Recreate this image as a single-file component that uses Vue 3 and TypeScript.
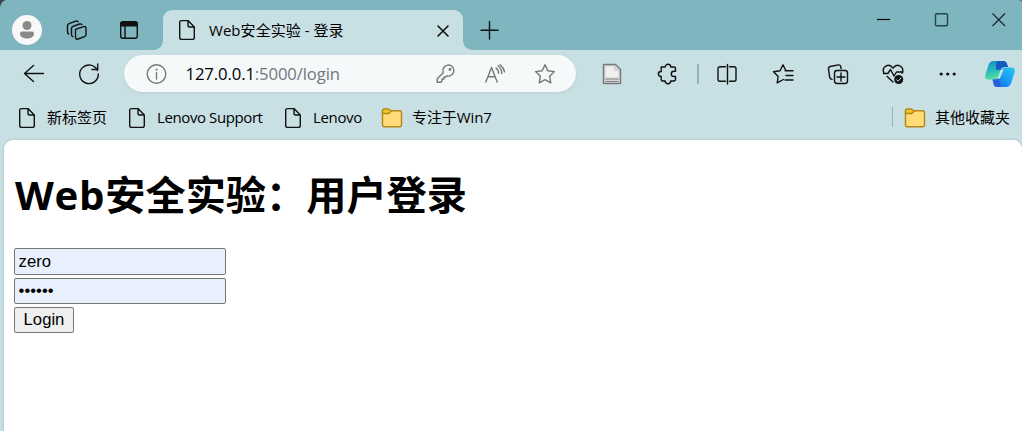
<script setup lang="ts">
import { ref } from 'vue'

const username = ref('zero')
const password = ref('123456')
</script>

<template>
  <div class="browser">
    <svg class="corner" width="8" height="8"><path d="M0 0H6Q1 1 0 7Z" fill="#3d4143" /></svg>
    <svg class="corner right" width="4" height="2"><path d="M0 0H4V2Q3 0 0 0Z" fill="#55666a" /></svg>
    <header class="tabs">
      <div class="avatar">
        <svg width="30" height="30" viewBox="0 0 30 30" fill="#8b8988">
          <circle cx="15" cy="10.5" r="4.5" />
          <path d="M10 16.5H20Q22 16.5 22 18.5C22 22 19 23.5 15 23.5S8 22 8 18.5Q8 16.5 10 16.5Z" />
        </svg>
      </div>
      <svg class="icon workspaces" viewBox="0 0 24 24">
        <path d="M11.1 11.1 18.6 8.6Q21 8 21 10.4V16.5Q21 18 19.5 18.6L13 21Q10.5 21.8 10.5 19V12.2Q10.5 11.4 11.1 11.1Z" />
        <path d="M7.8 18.7Q6.5 18.2 6.5 16.6V10.6Q6.5 9 8 8.4L14.5 6Q16 5.5 16.8 6.5M3.7 16Q2.5 15.5 2.5 14V8Q2.5 6.3 4 5.7L10.7 3.1Q12.2 2.6 13 3.6" />
      </svg>
      <svg class="icon tab-actions" viewBox="0 0 24 24">
        <rect x="3.7" y="3.7" width="16.6" height="16.6" rx="2.2" /><path d="M4 4.8H20V7.8H4Z" fill="#111" /><path d="M8 8V20" />
      </svg>
      <div class="tab">
        <svg class="icon" viewBox="0 0 24 24"><path d="M6.5 2.6H13L19.3 9V19.4Q19.3 21.4 17.3 21.4H6.7Q4.7 21.4 4.7 19.4V4.6Q4.7 2.6 6.5 2.6ZM13 2.9V7.2Q13 9 14.8 9H19" /></svg>
        <span class="title">Web安全实验 - 登录</span>
        <svg class="icon close" viewBox="0 0 24 24"><path d="M7 8 17 18M17 8 7 18" stroke-width="1.6" /></svg>
      </div>
      <svg class="icon plus" viewBox="0 0 24 24"><path d="M12.5 3.5V21M4 12.3H21" /></svg>
      <div class="window-controls">
        <svg viewBox="0 0 24 24"><path d="M5 12.5H18" stroke="#000" /></svg>
        <svg viewBox="0 0 24 24"><rect x="5.5" y="6.7" width="12" height="12" rx="1.3" stroke="#24444b" stroke-width="1.4" /></svg>
        <svg viewBox="0 0 24 24"><path d="M5.5 6.5 18 19M18 6.5 5.5 19" /></svg>
      </div>
    </header>

    <nav class="toolbar">
      <svg class="icon back" viewBox="0 0 24 24"><path d="M21.5 11.5H2.5M11.5 3.5 2.5 11.5 11.5 19.5" /></svg>
      <svg class="icon reload" viewBox="0 0 24 24"><path d="M20.5 8.5A9.3 9.3 0 1 0 21.3 12M15 7.5H20.7V2" /></svg>
      <div class="address">
        <svg class="icon info" viewBox="0 0 24 24"><circle cx="12.5" cy="12" r="9.3" /><path d="M12.5 10.8V17" /><circle cx="12.5" cy="7.7" r=".7" fill="#666" stroke-width=".5" /></svg>
        <span class="url"><b>127.0.0.1</b>:5000/login</span>
        <svg class="icon key" viewBox="0 0 24 24">
          <path d="M10.1 10.1A5.5 5.5 0 1 1 14 13.9L12.7 15H11V17H9V19L7.8 20.3H4.2V16.7L10 11ZM16.8 7.5h.1" /><circle cx="17" cy="7.5" r=".7" />
        </svg>
        <svg class="icon read" viewBox="0 0 24 24"><path d="M2.8 20 8.5 5.5 14.2 20M5 14.8H12M13.1 6.1Q15.7 8 15.6 11.3M15 3.8Q18.8 6.8 18.7 11.5M17 2.8Q20.9 6 21.5 9.8" /></svg>
        <svg class="icon star" viewBox="0 0 24 24"><path d="m12 2.8 2.8 6 6.6.8-4.8 4.6 1.2 6.6-5.8-3.2-5.8 3.2 1.2-6.6-4.8-4.6 6.6-.8Z" /></svg>
      </div>
      <svg class="icon reader" viewBox="0 0 24 24">
        <path d="M3.5 2.5H15.5L20.5 7.5V21.5H3.5Z" fill="#d4d3d3" stroke="#79797a" />
        <path d="M5.5 4.5H14V9H18.5V15.5H5.5Z" fill="#f0f0f0" stroke="none" /><path d="M6 17H18M6 19.5H18" stroke="#888" stroke-width="1" />
      </svg>
      <svg class="icon puzzle" viewBox="0 0 24 24"><path d="M5.5 5H9.2C9.2 1.3 14.7 1.3 14.7 5H18Q19.5 5 19.5 6.5V9.3H18C14.4 9.3 14.4 14.5 18 14.5H19.5V17.6Q19.5 19 18 19H14.7C14.7 22.7 9.2 22.7 9.2 19H6.7Q5.2 19 5.2 17.5V14.5C1.4 14.5 1.4 9.5 5.2 9.5V5Z" /></svg>
      <i class="rule"></i>
      <svg class="icon split" viewBox="0 0 24 24"><path d="M10.5 4.8H5Q3 4.8 3 6.8V17.2Q3 19.2 5 19.2H10.5M14.5 4.8H19Q21 4.8 21 6.8V17.2Q21 19.2 19 19.2H14.5" /><path d="M12.5 2.5V22" /></svg>
      <svg class="icon favorites" viewBox="0 0 24 24"><path d="M14.2 8.8H22M15 13.5H22M14 18H22M12.4 17.5 6.2 20.8 7.2 14.5 2.5 9.7 9 8.8 12 2.8 14.8 8.5" /></svg>
      <svg class="icon collections" viewBox="0 0 24 24"><path d="M6 17.4Q4 17 3.6 15L2.5 7Q2.2 5 4.2 4.5L12.4 2.9Q14.4 2.5 14.8 5L15.1 6.6" /><rect x="8.5" y="8.5" width="13" height="13" rx="2.4" /><path d="M15 11V19M11 15H19" /></svg>
      <svg class="icon health" viewBox="0 0 24 24">
        <path d="M3 11.3C0 4.5 8 .5 12 6.2C16 .5 24 4.5 21 11.3M2.5 11.5H6.8L9.5 7.5 13 14 15.5 10H22M6.2 14.5 12 20" />
        <circle cx="17.7" cy="17.5" r="4.5" fill="#111" stroke="none" /><path d="m15.7 17.8 1.4 1.4 2.9-3.2" stroke="#c8dfe3" stroke-width="1" />
      </svg>
      <svg class="icon more" viewBox="0 0 24 24"><g fill="#111" stroke="none"><circle cx="5.2" cy="12" r="1.6" /><circle cx="11.7" cy="12" r="1.6" /><circle cx="18.2" cy="12" r="1.6" /></g></svg>
      <svg class="copilot" width="30" height="28" viewBox="0 0 30 28">
        <defs>
          <linearGradient id="left" x1="0" y1="0" x2=".2" y2="1"><stop stop-color="#138bc8" /><stop offset=".5" stop-color="#22b7bd" /><stop offset="1" stop-color="#58dda0" /></linearGradient>
          <linearGradient id="right" x1="1" y1="0" x2="0" y2="1"><stop stop-color="#27c9f3" /><stop offset=".55" stop-color="#1698f4" /><stop offset="1" stop-color="#2453dc" /></linearGradient>
        </defs>
        <path d="M9 1H18.5Q21 1 22 4L23 7H20Q16.5 7 15.5 10.5L13.5 16Q12.5 19.5 9 19.5H3.5Q-.5 19.5 .3 15L3.5 5Q4.8 1 9 1Z" fill="url(#left)" />
        <path d="M12.5 1H18.5Q21 1 22 4L23 7H20Q16.5 7 15.5 10L11 9.5Q10 4 12.5 1Z" fill="#145ac0" />
        <path d="M23 7.5H27Q30.5 8 29.7 12L26.3 22.5Q25 27 21 27H12Q9.5 27 8.5 23.5L7.6 19.5H10Q13.5 19.5 14.5 16L16.5 10.5Q17.5 7.5 21 7.5Z" fill="url(#right)" />
        <path d="M7.6 19.5H10Q12 19.5 13.3 18L16 27H12Q9.5 27 8.5 23.5Z" fill="#2860dc" />
        <path d="M16 10.2 18.8 9.6 14.8 18.6H11.2Q13.2 18 14 15.6Z" fill="#c8dfe3" />
      </svg>
    </nav>

    <nav class="bookmarks">
      <svg class="icon" viewBox="0 0 24 24"><path d="M6.5 2.6H13L19.3 9V19.4Q19.3 21.4 17.3 21.4H6.7Q4.7 21.4 4.7 19.4V4.6Q4.7 2.6 6.5 2.6ZM13 2.9V7.2Q13 9 14.8 9H19" /></svg>
      <span class="new-page">新标签页</span>
      <svg class="icon" viewBox="0 0 24 24"><path d="M6.5 2.6H13L19.3 9V19.4Q19.3 21.4 17.3 21.4H6.7Q4.7 21.4 4.7 19.4V4.6Q4.7 2.6 6.5 2.6ZM13 2.9V7.2Q13 9 14.8 9H19" /></svg>
      <span class="support">Lenovo Support</span>
      <svg class="icon" viewBox="0 0 24 24"><path d="M6.5 2.6H13L19.3 9V19.4Q19.3 21.4 17.3 21.4H6.7Q4.7 21.4 4.7 19.4V4.6Q4.7 2.6 6.5 2.6ZM13 2.9V7.2Q13 9 14.8 9H19" /></svg>
      <span class="lenovo">Lenovo</span>
      <svg class="icon folder" viewBox="0 0 24 24"><rect x="2.5" y="4.8" width="19" height="16" rx="2" /><path d="M2.5 7V5Q2.5 3 4.5 3H8.5L11.2 5 8.7 7.5H2.5Z" fill="#f4c62e" /></svg>
      <span class="win">专注于Win7</span>
      <i class="rule other-rule"></i>
      <svg class="icon folder" viewBox="0 0 24 24"><rect x="2.5" y="4.8" width="19" height="16" rx="2" /><path d="M2.5 7V5Q2.5 3 4.5 3H8.5L11.2 5 8.7 7.5H2.5Z" fill="#f4c62e" /></svg>
      <span class="other">其他收藏夹</span>
    </nav>

    <main class="page">
      <h1><span>Web</span>安全实验：用户登录</h1>
      <form @submit.prevent>
        <input v-model="username" class="name" type="text" aria-label="用户名">
        <input v-model="password" class="pass" type="password" aria-label="密码">
        <button type="submit">Login</button>
      </form>
    </main>
  </div>
</template>

<style>
body { margin: 0; overflow: hidden; }
</style>

<style scoped>
* { box-sizing: border-box; }
.browser {
  width: 1022px; height: 431px; display: flex; flex-direction: column;
  background: #c8dfe3; color: #000; overflow: hidden; position: relative;
  font: 15px/20px "Open Sans", "Noto Sans CJK SC", sans-serif;
}
svg { display: block; flex: none; overflow: visible; }
.corner { position: absolute; left: 0; top: 0; z-index: 1; }
.corner.right { left: auto; right: 0; }
.icon { width: 24px; height: 24px; fill: none; stroke: #111; stroke-width: 1.4; stroke-linejoin: round; stroke-linecap: round; }
span { white-space: nowrap; }
.tabs { height: 50px; flex: none; display: flex; background: #7fb5bf; }
.avatar { width: 30px; height: 30px; margin: 15px 0 0 12px; border-radius: 50%; background: #f8f8f8; }
.workspaces { margin: 18px 0 0 23px; }
.tab-actions { margin: 18px 0 0 28px; }
.tab { width: 300px; height: 40px; margin: 10px 0 0 22px; padding: 8px 8px 0 12px; display: flex; background: #c8dfe3; border-radius: 9px 9px 0 0; position: relative; }
.tab::before, .tab::after { content: ""; position: absolute; bottom: 0; width: 9px; height: 9px; }
.tab::before { left: -9px; background: radial-gradient(circle at 0 0, transparent 8.5px, #c8dfe3 9px); }
.tab::after { right: -9px; background: radial-gradient(circle at 100% 0, transparent 8.5px, #c8dfe3 9px); }
.title { margin: 2px 0 0 10px; font-size: 15px; letter-spacing: .05px; }
.close { margin-left: auto; }
.plus { margin: 18px 0 0 14px; }
.window-controls { margin: 7px 11px 0 auto; display: flex; gap: 33.5px; }
.window-controls svg { width: 24px; height: 24px; fill: none; stroke: #18282b; stroke-width: 1.2; }
.toolbar { height: 48px; flex: none; display: flex; padding: 5px 6px 0 22px; }
.toolbar > .icon { margin-top: 7px; }
.toolbar > .reload { margin-left: 31px; }
.address { width: 452px; height: 37px; margin-left: 23px; border-radius: 19px; background: #f5f9fa; box-shadow: 0 1px 3px #b8d0d5; display: flex; align-items: center; padding: 0 19px 0 20px; }
.address .icon { stroke: #777; }
.url { margin-left: 17.5px; font-size: 16.7px; color: #737779; letter-spacing: -.12px; }
.url b { font-weight: 400; color: #000; }
.key { margin-left: auto; }
.read { margin-left: 26px; }
.star { margin-left: 26px; }
.reader { margin-left: 24px; }
.puzzle { margin-left: 32px; }
.rule { width: 2px; height: 20px; margin: 9px 0 0 17px; background: #9baeb2; flex: none; }
.split { margin-left: 16px; }
.favorites { margin-left: 32px; }
.collections { margin-left: 31px; }
.health { margin-left: 31px; }
.more { margin-left: 31px; }
.copilot { margin: 5px 0 0 25px; }
.bookmarks { height: 42px; flex: none; display: flex; align-items: center; padding: 0 12px 2px 15px; }
.bookmarks span { flex: none; margin: -2px 0 0 7px; }
.bookmarks .new-page { width: 78px; margin-left: 8px; }
.bookmarks .support { width: 124px; margin-left: 8px; letter-spacing: -.4px; }
.bookmarks .lenovo { width: 67px; margin-left: 8px; letter-spacing: -.35px; }
.bookmarks .folder { stroke: #b58613; fill: #ffdc77; }
.bookmarks .win { width: 80px; margin-left: 8px; letter-spacing: -.1px; }
.bookmarks .other-rule { width: 1px; margin: -3px 10px 0 auto; }
.bookmarks .other { width: 75px; margin-left: 8px; }
.page { flex: 1; margin-left: 4px; padding: 32px 10px 0; background: #fff; border-radius: 9px 9px 0 0; box-shadow: 0 0 3px #9bbdc4; }
h1 { height: 46px; margin: 0 0 0 1px; font: 700 40.2px/46px "Open Sans", "Noto Sans CJK SC", sans-serif; white-space: nowrap; }
h1 span { letter-spacing: .75px; }
form { display: flex; flex-direction: column; align-items: flex-start; margin-top: 30px; }
input, button { border: 1px solid #767676; border-radius: 2px; font: 16.67px "Liberation Sans", Arial, sans-serif; color: #000; outline: 0; }
input { width: 212px; height: 27px; padding: 2px 3px 1px 3.6px; background: #e8f0fe; }
.pass { height: 26px; margin: 3px 0; padding-bottom: 2px; padding-top: 1px; }
button { width: 60px; height: 26px; padding: 0; background: #efefef; }
</style>
